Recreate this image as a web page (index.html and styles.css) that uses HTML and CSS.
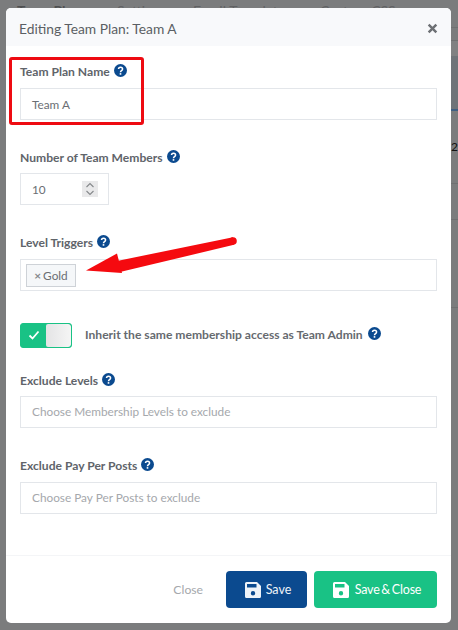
FILE: index.html
```html
<!DOCTYPE html>
<html lang="en">
<head>
<meta charset="utf-8">
<title>Editing Team Plan</title>
<link rel="stylesheet" href="styles.css">
</head>
<body>
<div class="backdrop">
  <div class="bg-tabs"><span class="t1">Team Plan</span><span class="t2">Settings</span><span class="t3">Email Templates</span><span class="t4">Custom CSS</span></div>
  <div class="bg-strip">
    <div class="s-a"></div>
    <div class="s-b"></div>
    <div class="s-c"></div>
    <div class="s-d">2</div>
    <div class="s-e"></div>
    <div class="s-f"></div>
    <div class="s-g"></div>
  </div>
</div>
<div class="modal">
  <header class="head">
    <h1>Editing Team Plan: Team A</h1>
    <svg class="x" viewBox="0 0 10 10"><path d="M1.500 1.500l7 7M8.500 1.500l-7 7"/></svg>
  </header>
  <div class="body">
    <div class="field f-name">
      <label>Team Plan Name <svg class="help" viewBox="0 0 12 12"><use href="#q"/></svg></label>
      <div class="input dark">Team A</div>
    </div>
    <div class="field f-num">
      <label>Number of Team Members <svg class="help" viewBox="0 0 12 12"><use href="#q"/></svg></label>
      <div class="input dark num">10<span class="spin"><svg viewBox="0 0 16 16"><path d="M4.500 6L8 2.500 11.500 6M4.500 10L8 13.500 11.500 10"/></svg></span></div>
    </div>
    <div class="field f-lvl">
      <label>Level Triggers <svg class="help" viewBox="0 0 12 12"><use href="#q"/></svg></label>
      <div class="input tags"><span class="tag"><i>×</i>Gold</span></div>
    </div>
    <div class="toggle-row">
      <span class="toggle"><span class="on"><svg viewBox="0 0 12 12"><path d="M1.500 6.500l3 3 6-7"/></svg></span><span class="knob"></span></span>
      <span class="toggle-label">Inherit the same membership access as Team Admin <svg class="help" viewBox="0 0 12 12"><use href="#q"/></svg></span>
    </div>
    <div class="field f-ex">
      <label>Exclude Levels <svg class="help" viewBox="0 0 12 12"><use href="#q"/></svg></label>
      <div class="input ph">Choose Membership Levels to exclude</div>
    </div>
    <div class="field f-pay">
      <label>Exclude Pay Per Posts <svg class="help" viewBox="0 0 12 12"><use href="#q"/></svg></label>
      <div class="input ph">Choose Pay Per Posts to exclude</div>
    </div>
  </div>
  <footer class="foot">
    <span class="close">Close</span>
    <span class="btn blue"><svg viewBox="0 0 16 16"><use href="#disk"/></svg>Save</span>
    <span class="btn green"><svg viewBox="0 0 16 16"><use href="#disk"/></svg>Save &amp; Close</span>
  </footer>
</div>
<div class="callout"></div>
<svg class="arrow" viewBox="0 0 458 630"><path class="shaft" d="M233 237.200L117 261L120 272L234 244.800Z"/><circle class="tip" cx="233" cy="241" r="3.800"/><path class="tip" d="M86 270.500L117 253.500L122 273Z"/></svg>
<svg class="defs" width="0" height="0">
  <symbol id="q" viewBox="0 0 12 12"><circle cx="6" cy="6" r="6" fill="#0b4a8f"/><path d="M4.200 4.700c0-2.300 3.700-2.300 3.700 0 0 1.500-1.900 1.400-1.900 2.900" fill="none" stroke="#fff" stroke-width="1.400"/><rect x="5.250" y="8.400" width="1.500" height="1.500" fill="#fff"/></symbol>
  <symbol id="disk" viewBox="0 0 16 16"><path fill-rule="evenodd" d="M1.500 0H12l4 4v10.500a1.500 1.500 0 0 1-1.500 1.500h-13A1.500 1.500 0 0 1 0 14.500v-13A1.500 1.500 0 0 1 1.500 0zM2 2v3.500h9.500V2zM8 9a2.200 2.200 0 1 0 0 4.400 2.200 2.200 0 0 0 0-4.400z"/></symbol>
</svg>
</body>
</html>
```
FILE: styles.css
```css
* { box-sizing: border-box; }
html, body { margin: 0; height: 630px; overflow: hidden; }
body { position: relative; background: #7b7c7d; font-family: "Lato", "Liberation Sans", sans-serif; color: #62666b; }
.backdrop { position: absolute; inset: 0; }
.bg-tabs { display: flex; padding: 2px 0 0 17px; font-size: 14px; color: #606163; white-space: nowrap; }
.t1 { width: 100px; font-weight: 700; color: #4e4f50; }
.t2 { width: 76px; }
.t3 { width: 127px; }
.bg-strip { position: absolute; right: 0; top: 27px; width: 7px; display: flex; flex-direction: column; }
.bg-strip div { border-top: 1px solid #6f7071; }
.s-a { height: 13px; }
.s-b { height: 16px; background: #808182; }
.s-c { height: 55px; background: #6f7479; border-bottom: 2px solid #3f5f82; border-top: 0 !important; }
.s-d { height: 72px; font-size: 12px; line-height: 14px; padding-top: 29px; color: #111; border-top: 0 !important; }
.s-e { height: 36px; }
.s-f { height: 88px; }
.s-g { height: 0; }
.modal { position: absolute; left: 6px; top: 8px; width: 445px; height: 615px; background: #fff; border-radius: 5px; display: flex; flex-direction: column; overflow: hidden; }
.head { flex: none; height: 38px; background: #f8f9fb; display: flex; align-items: center; justify-content: space-between; padding: 2px 13px 0 13px; }
.head h1 { margin: 0; font-size: 13.800px; font-weight: 400; color: #5b5f64; }
.x { width: 11px; height: 11px; stroke: #6d7074; stroke-width: 2.200; fill: none; }
.body { flex: none; height: 509px; padding: 0 14px; display: flex; flex-direction: column; }
.field label { display: flex; align-items: center; gap: 4px; font-size: 12.100px; font-weight: 700; color: #60646a; height: 16px; }
.help { width: 13px; height: 13px; margin-top: -2px; }
.input { margin-top: 8px; height: 32px; border: 1px solid #e3e6ea; background: #fff; display: flex; align-items: center; font-size: 11.800px; padding-left: 11px; }
.dark { color: #6a6e73; }
.ph { color: #a5a8ac; padding-bottom: 1px; }
.f-name { margin-top: 17px; }
.f-name .input { margin-top: 9px; }
.f-num { margin-top: 29px; }
.num { width: 89px; justify-content: space-between; padding-right: 10px; }
.spin { width: 16px; height: 16px; background: #e9e9ea; display: block; }
.spin svg { display: block; stroke: #85888b; stroke-width: 1.100; fill: none; }
.f-lvl { margin-top: 29px; }
.f-lvl .input { margin-top: 9px; }
.tags { padding-left: 5px; }
.tag { height: 23px; width: 50px; display: flex; align-items: center; justify-content: center; gap: 2px; background: #f5f7f9; border: 1px solid #ced2d7; color: #6a6e73; }
.tag i { font-style: normal; font-weight: 700; color: #85888b; }
.toggle-row { margin-top: 31px; display: flex; align-items: center; gap: 13px; height: 26px; }
.toggle { width: 52px; height: 25px; border-radius: 3px; border: 1px solid #19c285; background: #19c285; display: flex; overflow: hidden; flex: none; }
.on { width: 25px; display: flex; align-items: center; justify-content: center; }
.on svg { width: 12px; height: 12px; stroke: #fff; stroke-width: 1.800; fill: none; }
.knob { flex: 1; background: linear-gradient(90deg, #e4e4e5, #f5f5f5); border-radius: 2px 3px 3px 2px; }
.toggle-label { display: flex; align-items: center; gap: 5px; font-size: 12.100px; font-weight: 700; color: #666a6f; white-space: nowrap; padding-bottom: 1px; }
.f-ex { margin-top: 24px; }
.f-pay { margin-top: 29px; }
.f-pay .input { margin-top: 9px; }
.foot { flex: 1; border-top: 1px solid #f4f5f7; display: flex; align-items: flex-start; justify-content: flex-end; gap: 7px; padding: 15px 14px 0 0; }
.close { font-size: 12.200px; color: #a5a8ac; line-height: 37px; margin-right: 16px; }
.btn { height: 37px; border-radius: 4px; display: flex; align-items: center; justify-content: center; gap: 5px; padding-left: 3px; color: #eef3f8; font-size: 12.500px; }
.btn svg { width: 16px; height: 16px; fill: currentColor; }
.blue { width: 81px; background: #0b4a8f; }
.green { width: 123px; background: #19c285; color: #fff; gap: 6px; word-spacing: -1.200px; letter-spacing: -.2px; }
.callout { position: absolute; left: 9px; top: 57px; width: 135px; height: 68px; border: 3px solid #ee0b12; border-radius: 3px; }
.arrow { position: absolute; left: 0; top: 0; width: 458px; height: 630px; }
.shaft, .tip { fill: #f50a0f; }
.defs { position: absolute; }
```
